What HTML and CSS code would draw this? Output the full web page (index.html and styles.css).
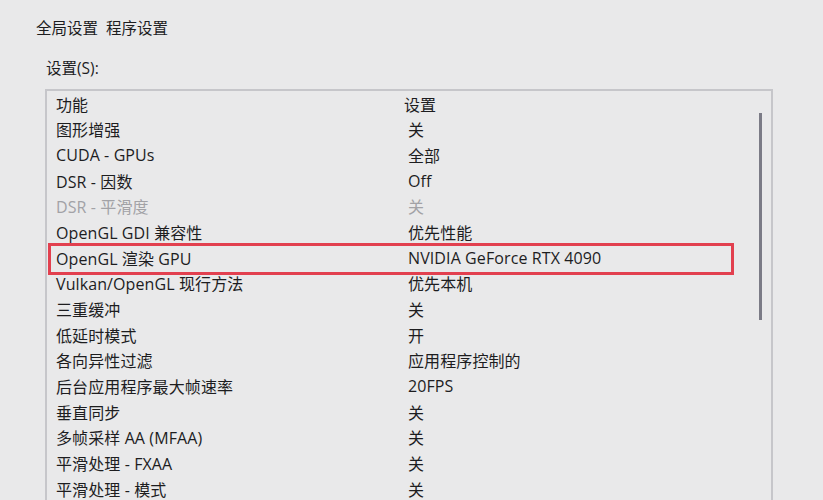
FILE: index.html
```html
<!DOCTYPE html>
<html lang="zh-CN">
<head>
<meta charset="utf-8">
<link rel="stylesheet" href="styles.css">
</head>
<body>
<div class="page">
  <div class="tabs"><span class="tab">全局设置</span><span class="tab">程序设置</span></div>
  <div class="label">设置(S):</div>
  <div class="table">
    <div class="row head"><span class="c1">功能</span><span class="c2">设置</span></div>
    <div class="row"><span class="c1">图形增强</span><span class="c2">关</span></div>
    <div class="row"><span class="c1">CUDA - GPUs</span><span class="c2">全部</span></div>
    <div class="row"><span class="c1">DSR - 因数</span><span class="c2">Off</span></div>
    <div class="row dis"><span class="c1">DSR - 平滑度</span><span class="c2">关</span></div>
    <div class="row"><span class="c1">OpenGL GDI 兼容性</span><span class="c2">优先性能</span></div>
    <div class="row hl"><span class="c1">OpenGL 渲染 GPU</span><span class="c2">NVIDIA GeForce RTX 4090</span></div>
    <div class="row"><span class="c1">Vulkan/OpenGL 现行方法</span><span class="c2">优先本机</span></div>
    <div class="row"><span class="c1">三重缓冲</span><span class="c2">关</span></div>
    <div class="row"><span class="c1">低延时模式</span><span class="c2">开</span></div>
    <div class="row"><span class="c1">各向异性过滤</span><span class="c2">应用程序控制的</span></div>
    <div class="row"><span class="c1">后台应用程序最大帧速率</span><span class="c2">20FPS</span></div>
    <div class="row"><span class="c1">垂直同步</span><span class="c2">关</span></div>
    <div class="row"><span class="c1">多帧采样 AA (MFAA)</span><span class="c2">关</span></div>
    <div class="row"><span class="c1">平滑处理 - FXAA</span><span class="c2">关</span></div>
    <div class="row"><span class="c1">平滑处理 - 模式</span><span class="c2">关</span></div>
    <div class="scroll"></div>
  </div>
</div>
</body>
</html>
```

FILE: styles.css
```css
html, body {
  margin: 0;
  padding: 0;
  background: #e9e9ea;
  overflow: hidden;
  height: 500px;
}
.page {
  font-family: "Open Sans", "Noto Sans CJK SC", sans-serif;
  font-size: 16px;
  color: #1d1d1f;
  padding-top: 17px;
}
.tabs {
  display: flex;
  gap: 8px;
  padding-left: 36px;
  line-height: 22px;
  font-size: 15.5px;
}
.label {
  margin-top: 18px;
  padding-left: 46px;
  line-height: 22px;
  font-size: 15.5px;
}
.table {
  position: relative;
  margin-top: 10px;
  margin-left: 45px;
  width: 724px;
  border: 2px solid #c6c6ca;
  border-bottom: none;
  height: 460px;
}
.row {
  display: flex;
  height: 25.67px;
  align-items: center;
  padding-left: 9px;
  position: relative;
  letter-spacing: 0.1px;
}
.c1 {
  width: 352px;
  flex: none;
}
.c2 {
  flex: 1;
}
.head .c2 {
  margin-left: -4px;
}
.dis {
  color: #a2a2a6;
}
.hl::after {
  content: "";
  position: absolute;
  left: 1px;
  right: 37px;
  top: -2px;
  bottom: -4px;
  border: 3px solid #e2404f;
}
.scroll {
  position: absolute;
  right: 9px;
  top: 22px;
  width: 3px;
  height: 207px;
  background: #7b7b86;
}
```
